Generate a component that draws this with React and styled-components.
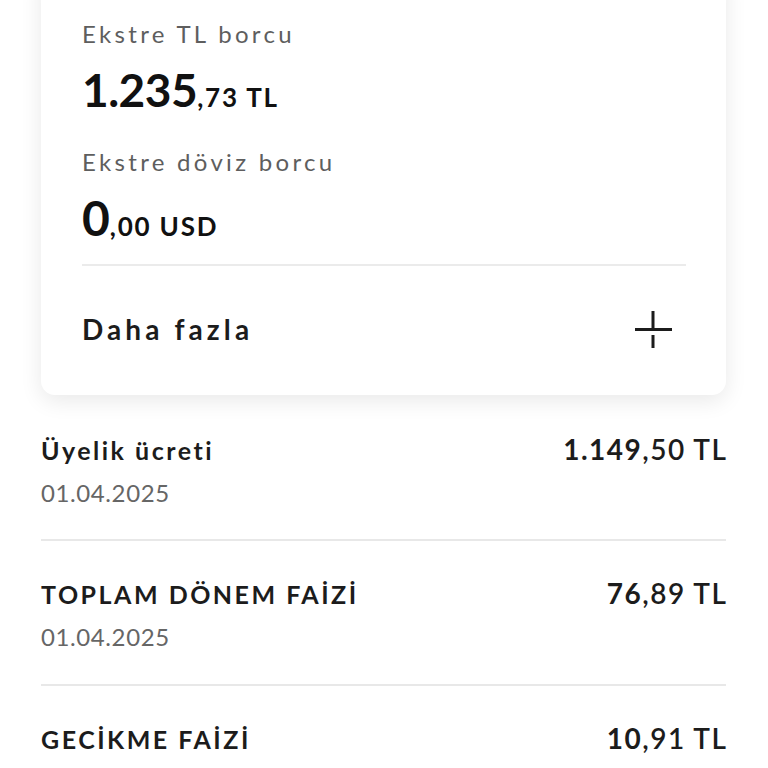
import React from "react";
import styled, { createGlobalStyle } from "styled-components";

const Global = createGlobalStyle`
  html, body { margin: 0; padding: 0; background: #ffffff; }
  body { font-family: Lato, "Open Sans", sans-serif; color: #1c1c1c; overflow: hidden; }
`;

const Page = styled.div`
  width: 768px;
  height: 768px;
  overflow: hidden;
  padding: 0 42px 0 41px;
  box-sizing: border-box;
`;

const Card = styled.section`
  margin-top: -30px;
  padding: 50px 40px 0 41px;
  background: #fff;
  border-radius: 14px;
  box-shadow: 0 6px 22px rgba(0, 0, 0, 0.09);
`;

const Label = styled.div`
  font-size: 24px;
  line-height: 1.2;
  color: #5e5e5e;
  letter-spacing: 3.3px;
`;

const BigAmount = styled.div`
  margin: 13px 0 ${(p) => p.$bottom || 0}px;
  line-height: 55px;
  height: 55px;
  color: #111;
`;

const Whole = styled.span`
  font-size: ${(p) => (p.$wide ? "48px" : "46px")};
  font-weight: 700;
  letter-spacing: ${(p) => (p.$wide ? "0px" : "-0.5px")};
`;

const Fraction = styled.span`
  font-size: 26px;
  font-weight: 700;
  letter-spacing: 1.8px;
`;

const Divider = styled.hr`
  border: 0;
  height: 2px;
  background: #ebebeb;
  margin: ${(p) => p.$top || 0}px 0 0;
`;

const MoreRow = styled.div`
  height: 129px;
  display: flex;
  align-items: center;
  justify-content: space-between;
  padding-right: 14px;
`;

const MoreText = styled.span`
  font-size: 28px;
  line-height: 1.2;
  font-weight: 700;
  color: #1c1c1c;
  letter-spacing: 4.1px;
`;

const List = styled.div`
  margin-top: 2px;
`;

const Row = styled.div`
  padding: 37px 0 32px;
  border-bottom: 2px solid #e8e8e8;
`;

const RowTop = styled.div`
  display: flex;
  justify-content: space-between;
  align-items: baseline;
`;

const Title = styled.div`
  font-size: 25px;
  line-height: 30px;
  font-weight: 700;
  color: #1c1c1c;
  letter-spacing: 2.5px;
`;

const Amount = styled.div`
  font-size: 28px;
  line-height: 30px;
  color: #1c1c1c;
  letter-spacing: 1.5px;
  margin-right: -1.5px;
`;

const AmountWhole = styled.span`
  font-weight: 700;
`;

const AmountRest = styled.span`
  font-weight: 600;
`;

const DateText = styled.div`
  margin-top: 14px;
  font-size: 24px;
  line-height: 1.2;
  color: #666;
  letter-spacing: 0.6px;
`;

const PlusIcon = () => (
  <svg width="38" height="38" viewBox="0 0 38 38" fill="none">
    <path d="M1 18.5H38" stroke="#1c1c1c" strokeWidth="3" />
    <path d="M19 0V17M19 24V37" stroke="#1c1c1c" strokeWidth="3" />
  </svg>
);

const rows = [
  { title: "Üyelik ücreti", date: "01.04.2025", whole: "1.149", rest: ",50 TL" },
  { title: "TOPLAM DÖNEM FAİZİ", date: "01.04.2025", whole: "76", rest: ",89 TL" },
  { title: "GECİKME FAİZİ", date: "01.04.2025", whole: "10", rest: ",91 TL" },
];

export default function App() {
  return (
    <Page>
      <Global />
      <Card>
        <Label>Ekstre TL borcu</Label>
        <BigAmount $bottom={31}>
          <Whole>1.235</Whole>
          <Fraction>,73 TL</Fraction>
        </BigAmount>
        <Label>Ekstre döviz borcu</Label>
        <BigAmount>
          <Whole $wide>0</Whole>
          <Fraction>,00 USD</Fraction>
        </BigAmount>
        <Divider $top={19} />
        <MoreRow>
          <MoreText>Daha fazla</MoreText>
          <PlusIcon />
        </MoreRow>
      </Card>
      <List>
        {rows.map((r) => (
          <Row key={r.title}>
            <RowTop>
              <Title>{r.title}</Title>
              <Amount>
                <AmountWhole>{r.whole}</AmountWhole>
                <AmountRest>{r.rest}</AmountRest>
              </Amount>
            </RowTop>
            <DateText>{r.date}</DateText>
          </Row>
        ))}
      </List>
    </Page>
  );
}
